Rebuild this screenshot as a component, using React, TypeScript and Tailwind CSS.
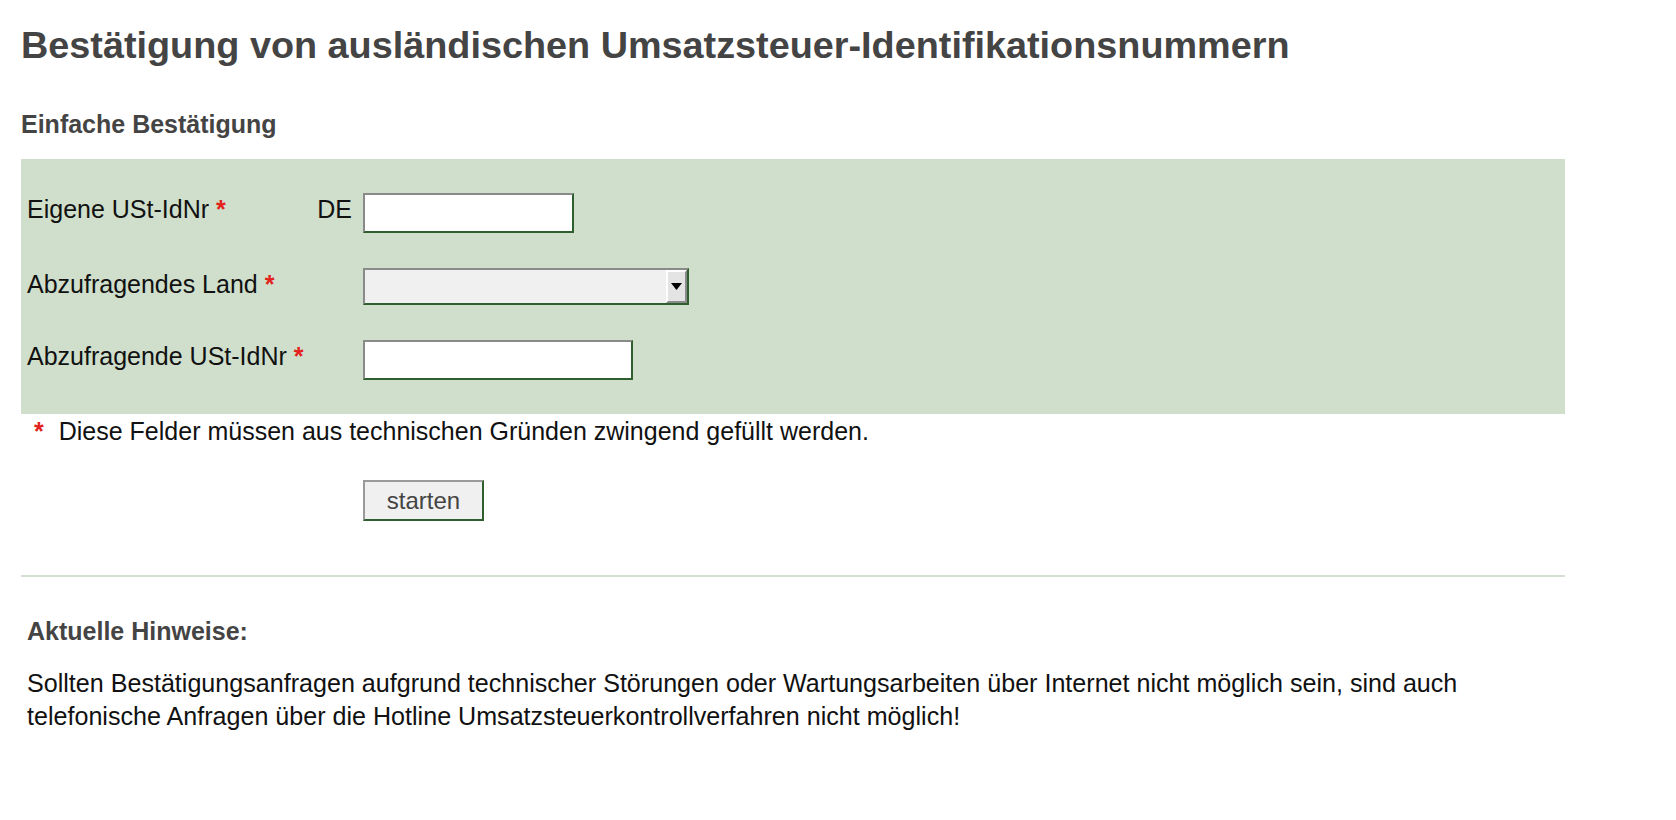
import { useState } from 'react';

const Star = () => <span className="text-[#e3211c] font-bold">*</span>;

export default function App() {
  const [own, setOwn] = useState('');
  const [land, setLand] = useState('');
  const [other, setOther] = useState('');

  const field =
    'h-[40px] bg-white border-2 border-t-[#8a8a8a] border-l-[#8a8a8a] border-b-[#2f5f2f] border-r-[#2f5f2f] px-1 text-[22px] outline-none';

  return (
    <div className="min-h-screen bg-white px-[21px] font-['Liberation_Sans',Arial,sans-serif] text-[25px] text-[#111]">
      <h1 className="pt-[21px] text-[37.8px] font-bold leading-[48px] text-[#444]">
        Bestätigung von ausländischen Umsatzsteuer-Identifikationsnummern
      </h1>

      <h2 className="mt-[40px] text-[25px] font-bold leading-[30px] text-[#444]">Einfache Bestätigung</h2>

      {/* Formular */}
      <div className="mt-[20px] w-[1544px] bg-[#cfdfcc] py-[34px] pl-[6px]">
        <div className="flex flex-col gap-[35px]">
          <div className="flex items-center">
            <label className="mb-[9px] flex w-[336px] items-center justify-between pr-[11px] leading-[30px]">
              <span>
                Eigene USt-IdNr <Star />
              </span>
              <span>DE</span>
            </label>
            <input value={own} onChange={e => setOwn(e.target.value)} className={`${field} w-[211px]`} />
          </div>

          <div className="flex items-center">
            <label className="mb-[5px] w-[336px] leading-[30px]">
              Abzufragendes Land <Star />
            </label>
            <div className="relative h-[37px] w-[326px] border-2 border-t-[#8a8a8a] border-l-[#8a8a8a] border-b-[#2f5f2f] border-r-[#2f5f2f] bg-[#f0f0f0]">
              <select
                value={land}
                onChange={e => setLand(e.target.value)}
                className="h-full w-full appearance-none bg-transparent px-1 text-[22px] outline-none"
              >
                <option value=""></option>
                <option value="AT">AT - Österreich</option>
                <option value="BE">BE - Belgien</option>
                <option value="FR">FR - Frankreich</option>
              </select>
              <div className="pointer-events-none absolute right-0 top-0 flex h-full w-[21px] items-center justify-center border-2 border-t-white border-l-white border-b-[#8a8a8a] border-r-[#8a8a8a] bg-[#e4e4e4]">
                <svg width="11" height="7" viewBox="0 0 11 7">
                  <path d="M0 0h11L5.5 7z" fill="#000" />
                </svg>
              </div>
            </div>
          </div>

          <div className="flex items-center">
            <label className="mb-[8px] w-[336px] leading-[30px]">
              Abzufragende USt-IdNr <Star />
            </label>
            <input value={other} onChange={e => setOther(e.target.value)} className={`${field} h-[39px] w-[270px]`} />
          </div>
        </div>
      </div>

      <p className="mt-[2px] pl-[13px] leading-[30px]">
        <Star />
        <span className="ml-[15px]">Diese Felder müssen aus technischen Gründen zwingend gefüllt werden.</span>
      </p>

      <div className="mt-[34px] pl-[342px]">
        <button className="h-[41px] w-[121px] border-2 border-t-[#9a9a9a] border-l-[#9a9a9a] border-b-[#2f5f2f] border-r-[#2f5f2f] bg-[#f0f0f0] text-[24px] text-[#444]">
          starten
        </button>
      </div>

      <hr className="mt-[54px] w-[1544px] border-0 border-t-2 border-[#d3dfd1]" />

      <div className="pl-[6px]">
        <h3 className="mt-[39px] font-bold leading-[30px] text-[#444]">Aktuelle Hinweise:</h3>
        <p className="mt-[21px] w-[1480px] text-[25.1px] leading-[33px]">
          Sollten Bestätigungsanfragen aufgrund technischer Störungen oder Wartungsarbeiten über Internet nicht möglich sein, sind auch
          telefonische Anfragen über die Hotline Umsatzsteuerkontrollverfahren nicht möglich!
        </p>
      </div>
    </div>
  );
}
